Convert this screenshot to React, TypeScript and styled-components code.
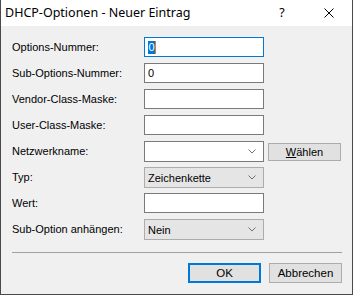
import React from "react";
import styled, { createGlobalStyle } from "styled-components";

const Global = createGlobalStyle`
  html, body { margin: 0; padding: 0; background: #f0f0f0; }
  * { box-sizing: border-box; }
`;

const Window = styled.div`
  width: 353px;
  height: 295px;
  display: flex;
  flex-direction: column;
  background: #f0f0f0;
  border-left: 1px solid #4a4a4a;
  border-right: 1px solid #4a4a4a;
  border-bottom: 1px solid #4a4a4a;
  font-family: "Liberation Sans", Arial, sans-serif;
  font-size: 11px;
  color: #000;
`;

const TitleBar = styled.div`
  height: 26px;
  background: #fff;
  display: flex;
  align-items: center;
  padding-left: 4px;
  font-family: "Noto Sans", "Segoe UI", sans-serif;
  font-size: 12.5px;
`;

const Title = styled.div`
  flex: 1;
  padding-bottom: 1px;
`;

const Help = styled.div`
  width: 14px;
  text-align: center;
  margin-right: 35px;
  padding-bottom: 2px;
`;

const CloseIcon = styled.svg`
  width: 10px;
  height: 10px;
  margin-right: 18px;
  margin-bottom: 1px;
`;

const Body = styled.div`
  flex: 1;
  display: flex;
  flex-direction: column;
  padding: 11px 11px 0 11px;
`;

const Form = styled.div`
  display: grid;
  grid-template-columns: 132px 120px 77px;
  grid-auto-rows: 20px;
  row-gap: 6px;
`;

const Label = styled.div`
  display: flex;
  align-items: center;
  grid-column: 1;
  padding-bottom: 1px;
`;

const TextBox = styled.div<{ $focused?: boolean }>`
  grid-column: 2;
  height: 20px;
  background: #fff;
  border: 1px solid ${(p) => (p.$focused ? "#0078d7" : "#7a7a7a")};
  display: flex;
  align-items: center;
  padding-left: 3px;
`;

const Selected = styled.span`
  background: #0078d7;
  color: #fff;
  line-height: 13px;
  padding: 0 0.5px;
  border-right: 1px solid #e07a1f;
`;

const Combo = styled.div<{ $editable?: boolean }>`
  grid-column: 2;
  height: 21px;
  background: ${(p) => (p.$editable ? "#fff" : "#e5e5e5")};
  border: 1px solid ${(p) => (p.$editable ? "#7a7a7a" : "#acacac")};
  display: flex;
  align-items: center;
  padding-left: 3px;
  padding-right: 7px;
`;

const ComboText = styled.span`
  flex: 1;
`;

const Chevron = styled.svg`
  width: 8px;
  height: 5px;
`;

const SmallButton = styled.div`
  grid-column: 3;
  margin-left: 4px;
  width: 73px;
  height: 18px;
  margin-top: 2px;
  background: #e1e1e1;
  border: 1px solid #adadad;
  display: flex;
  align-items: center;
  justify-content: center;
`;

const Separator = styled.div`
  margin-top: 13px;
  height: 1px;
  width: 330px;
  background: #a0a0a0;
`;

const ButtonRow = styled.div`
  display: flex;
  justify-content: flex-end;
  gap: 8px;
  margin-top: 10px;
  width: 330px;
`;

const Button = styled.div<{ $default?: boolean }>`
  width: 73px;
  height: 20px;
  background: #e1e1e1;
  border: ${(p) => (p.$default ? "2px solid #0078d7" : "1px solid #adadad")};
  display: flex;
  align-items: center;
  justify-content: center;
  font-size: 11.5px;
`;

const ChevronIcon = () => (
  <Chevron viewBox="0 0 8 5">
    <polyline points="0.5,0.5 4,4 7.5,0.5" fill="none" stroke="#707070" strokeWidth="1" />
  </Chevron>
);

export default function App() {
  return (
    <>
      <Global />
      <Window>
        <TitleBar>
          <Title>DHCP-Optionen - Neuer Eintrag</Title>
          <Help>?</Help>
          <CloseIcon viewBox="0 0 10 10">
            <path d="M0.5 0.5 L9.5 9.5 M9.5 0.5 L0.5 9.5" stroke="#000" strokeWidth="1" />
          </CloseIcon>
        </TitleBar>
        <Body>
          <Form>
            <Label>Options-Nummer:</Label>
            <TextBox $focused>
              <Selected>0</Selected>
            </TextBox>
            <div />
            <Label>Sub-Options-Nummer:</Label>
            <TextBox>0</TextBox>
            <div />
            <Label>Vendor-Class-Maske:</Label>
            <TextBox />
            <div />
            <Label>User-Class-Maske:</Label>
            <TextBox />
            <div />
            <Label>Netzwerkname:</Label>
            <Combo $editable>
              <ComboText />
              <ChevronIcon />
            </Combo>
            <SmallButton>
              <span>
                <u>W</u>ählen
              </span>
            </SmallButton>
            <Label>Typ:</Label>
            <Combo>
              <ComboText>Zeichenkette</ComboText>
              <ChevronIcon />
            </Combo>
            <div />
            <Label>Wert:</Label>
            <TextBox />
            <div />
            <Label>Sub-Option anhängen:</Label>
            <Combo>
              <ComboText>Nein</ComboText>
              <ChevronIcon />
            </Combo>
            <div />
          </Form>
          <Separator />
          <ButtonRow>
            <Button $default>OK</Button>
            <Button>Abbrechen</Button>
          </ButtonRow>
        </Body>
      </Window>
    </>
  );
}
